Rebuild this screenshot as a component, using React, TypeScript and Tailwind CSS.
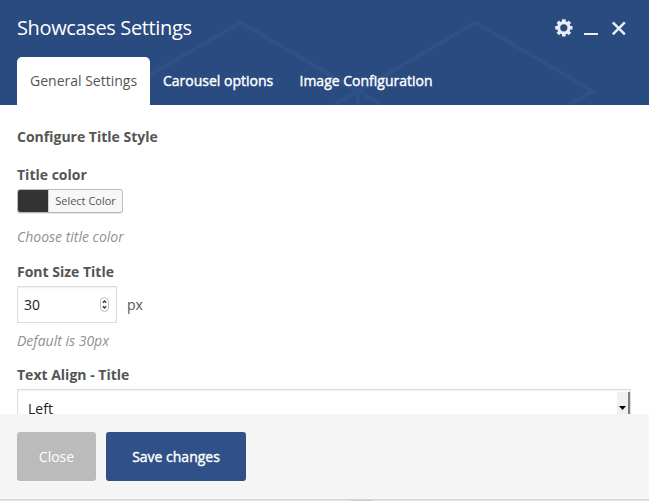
import React from "react";

function HeaderPattern() {
  return (
    <svg className="pointer-events-none absolute inset-0" width="649" height="105" fill="none" stroke="#305187" strokeWidth="4">
      <path d="M98 105L240.500 22.500L382 105" />
      <path d="M334 105L475.500 22.500L593 91L569 105" />
      <path d="M358 91V105" />
    </svg>
  );
}

function GearIcon() {
  return (
    <svg width="18" height="18" viewBox="0 0 18 18" fill="none" stroke="#eaeef5">
      <circle cx="8.800" cy="8.800" r="5.200" strokeWidth="3.200" />
      <g strokeWidth="3.600">
        <path d="M8.800 .2V3M8.800 15v2.500M.2 8.800H3M15 8.800h2.500M2.800 2.800l1.900 1.900M13 13l1.900 1.900M2.800 14.900l1.900-1.900M13 4.700l1.900-1.900" />
      </g>
    </svg>
  );
}

function Header() {
  return (
    <header className="relative h-[105px] bg-[#2a4b80] text-white">
      <HeaderPattern />
      <div className="relative flex h-[57px] justify-between pl-[17px] pr-[22px]">
        <h1 className="pt-[13px] text-[20px] leading-[30px] tracking-[-0.36px]">Showcases Settings</h1>
        <div className="flex pt-[19px]">
          <GearIcon />
          <div className="ml-[11px] mt-[14px] h-[2px] w-[14px] bg-[#eaeef5]" />
          <svg className="ml-[13px] mt-px" width="16" height="16" viewBox="0 0 16 16" stroke="#eaeef5" strokeWidth="2.500">
            <path d="M1.800 2.300l12 12M13.800 2.300l-12 12" />
          </svg>
        </div>
      </div>
      <nav className="relative flex h-12 pl-[17px] text-[14px] leading-[48px]">
        <div className="w-[133px] rounded-t-[5px] bg-white pl-[13px] text-[#555]">General Settings</div>
        <div className="w-[136px] pl-[13px] [-webkit-text-stroke:0.4px_white]">Carousel options</div>
        <div className="pl-[13.5px] [-webkit-text-stroke:0.4px_white]">Image Configuration</div>
      </nav>
    </header>
  );
}

export default function App() {
  return (
    <div className="flex h-[501px] w-[649px] flex-col overflow-hidden bg-white font-['Open_Sans',sans-serif] text-[14px] leading-5 text-[#555]">
      <Header />
      <main className="flex h-[309px] flex-col items-start overflow-hidden pl-[17px] pt-[22px]">
        <h2 className="font-bold">Configure Title Style</h2>
        <h3 className="mt-[18px] font-bold">Title color</h3>
        <button className="mt-[4px] flex h-6 w-[106px] shrink-0 overflow-hidden rounded-[3px] border border-[#bbb] bg-[#f7f7f7] text-[11px] leading-[22px] shadow-[0_1px_0_#e5e5e5]">
          <span className="w-[30px] bg-[#333]" />
          <span className="flex-1 border-l border-[#ccc] text-center">Select Color</span>
        </button>
        <p className="mt-[14px] italic text-[#919191]">Choose title color</p>
        <h3 className="mt-[15px] font-bold">Font Size Title</h3>
        <div className="mt-[4px] flex h-[37px] shrink-0 items-center">
          <div className="flex h-[37px] w-[100px] items-center justify-between border border-[#ddd] pl-[6px] pr-[7px] text-[#222] shadow-[inset_0_1px_2px_rgba(0,0,0,.07)]">
            <span>30</span>
            <svg width="9" height="15" viewBox="0 0 9 15" fill="none">
              <rect x=".5" y=".5" width="8" height="14" rx="4" stroke="#bbb" />
              <path d="M2.800 5.800L4.500 4l1.700 1.800M2.800 9.200L4.500 11l1.700-1.800" stroke="#333" strokeWidth="1.300" />
            </svg>
          </div>
          <span className="ml-[10px]">px</span>
        </div>
        <p className="mt-[8px] italic text-[#919191]">Default is 30px</p>
        <h3 className="mt-[14px] font-bold">Text Align - Title</h3>
        <div className="mt-[4px] flex h-[37px] w-[614px] shrink-0 justify-between border border-[#ddd] pl-[10px] text-[#222] shadow-[inset_0_1px_2px_rgba(0,0,0,.07)]">
          <span className="pt-[9px]">Left</span>
          <div className="mt-[2px] flex w-[13px] justify-center border-r-2 border-[#808080] bg-[#f0f0f0] pt-[14px]">
            <svg width="7" height="4"><path d="M0 0h7L3.500 4z" fill="#000" /></svg>
          </div>
        </div>
      </main>
      <footer className="flex h-[85px] gap-[10px] bg-[#f5f5f5] pl-[17px] pt-[18px] text-white">
        <button className="h-[49px] w-[79px] rounded-[3px] bg-[#bbb]">Close</button>
        <button className="h-[49px] w-[140px] rounded-[3px] bg-[#305187] [-webkit-text-stroke:0.4px_white]">Save changes</button>
      </footer>
      <div className="h-[2px] border-t border-[#d5d5d5] bg-[#e5e5e5] pl-[351px]">
        <div className="h-px w-[22px] bg-[#ccc]" />
      </div>
    </div>
  );
}
